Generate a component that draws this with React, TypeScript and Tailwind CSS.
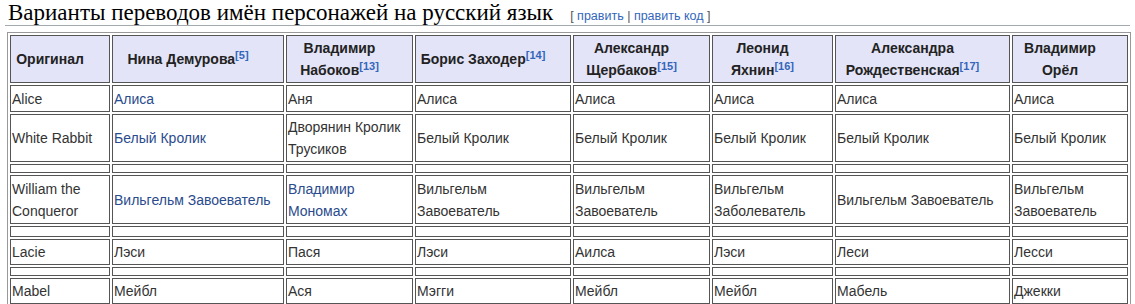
import React from "react";

type Cell = { text: string; link?: boolean };

const headers: { name: string; ref?: string; w: number }[] = [
  { name: "Оригинал", w: 100 },
  { name: "Нина Демурова", ref: "5", w: 172 },
  { name: "Владимир Набоков", ref: "13", w: 127 },
  { name: "Борис Заходер", ref: "14", w: 156 },
  { name: "Александр Щербаков", ref: "15", w: 137 },
  { name: "Леонид Яхнин", ref: "16", w: 121 },
  { name: "Александра Рождественская", ref: "17", w: 175 },
  { name: "Владимир Орёл", w: 116 },
];

// gap: height of the squashed empty row drawn above the row
const rows: { cells: Cell[]; h: string; gap?: string }[] = [
  {
    h: "h-[27px]",
    cells: [
      { text: "Alice" },
      { text: "Алиса", link: true },
      { text: "Аня" },
      { text: "Алиса" },
      { text: "Алиса" },
      { text: "Алиса" },
      { text: "Алиса" },
      { text: "Алиса" },
    ],
  },
  {
    h: "h-[48px]",
    cells: [
      { text: "White Rabbit" },
      { text: "Белый Кролик", link: true },
      { text: "Дворянин Кролик Трусиков" },
      { text: "Белый Кролик" },
      { text: "Белый Кролик" },
      { text: "Белый Кролик" },
      { text: "Белый Кролик" },
      { text: "Белый Кролик" },
    ],
  },
  {
    h: "h-[49px]",
    gap: "h-[9px]",
    cells: [
      { text: "William the Conqueror" },
      { text: "Вильгельм Завоеватель", link: true },
      { text: "Владимир Мономах", link: true },
      { text: "Вильгельм Завоеватель" },
      { text: "Вильгельм Завоеватель" },
      { text: "Вильгельм Заболеватель" },
      { text: "Вильгельм Завоеватель" },
      { text: "Вильгельм Завоеватель" },
    ],
  },
  {
    h: "h-[26px]",
    gap: "h-[11px]",
    cells: [
      { text: "Lacie" },
      { text: "Лэси" },
      { text: "Пася" },
      { text: "Лэси" },
      { text: "Аилса" },
      { text: "Лэси" },
      { text: "Леси" },
      { text: "Лесси" },
    ],
  },
  {
    h: "h-[26px]",
    gap: "h-[9px]",
    cells: [
      { text: "Mabel" },
      { text: "Мейбл" },
      { text: "Ася" },
      { text: "Мэгги" },
      { text: "Мейбл" },
      { text: "Мейбл" },
      { text: "Мабель" },
      { text: "Джекки" },
    ],
  },
];

const Sliver = ({ h }: { h: string }) => (
  <tr>
    {headers.map((c) => (
      <td key={c.name} className={`${h} border border-[#555] p-0 leading-none`} />
    ))}
  </tr>
);

export default function App() {
  return (
    <div className="min-h-[304px] bg-white px-[5px] font-['Liberation_Sans',Arial,sans-serif]">
      <h2 className="flex items-baseline h-[26px] border-b border-[#a2a9b1] pl-[3px] leading-[26px]">
        <span className="font-['Liberation_Serif',Georgia,serif] text-[23px] text-black">
          Варианты переводов имён персонажей на русский язык
        </span>
        <span className="ml-[17px] text-[12.5px] text-[#555]">
          [ <span className="text-[#3366bb]">править</span> |{" "}
          <span className="text-[#3366bb]">править код</span> ]
        </span>
      </h2>

      <table className="mt-[6px] ml-[2px] w-[1124px] table-fixed border-separate border-spacing-[2px] border border-[#999] text-[14px] leading-[22px]">
        <colgroup>
          {headers.map((c) => (
            <col key={c.name} style={{ width: c.w }} />
          ))}
        </colgroup>
        <thead>
          <tr>
            {headers.map((c) => (
              <th
                key={c.name}
                className="h-[48px] border border-[#555] bg-[#e3e4f8] pl-[4px] pr-[24px] py-[1px] text-center align-middle font-bold text-[#222]"
              >
                {c.name}
                {c.ref && (
                  <sup className="text-[11px] text-[#3366bb]">[{c.ref}]</sup>
                )}
              </th>
            ))}
          </tr>
        </thead>
        <tbody>
          {rows.map((r, i) => (
            <React.Fragment key={i}>
              {r.gap && <Sliver h={r.gap} />}
              <tr>
                {r.cells.map((c, j) => (
                  <td
                    key={j}
                    className={`${r.h} border border-[#555] pl-[1px] pr-[2px] py-[1px] align-middle ${
                      c.link ? "text-[#2a4b8d]" : "text-[#333]"
                    }`}
                  >
                    {c.text}
                  </td>
                ))}
              </tr>
            </React.Fragment>
          ))}
        </tbody>
      </table>
    </div>
  );
}
